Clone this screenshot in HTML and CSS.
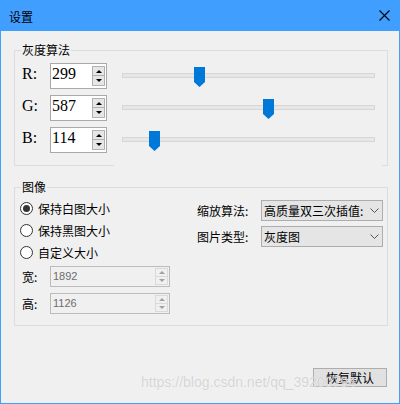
FILE: index.html
```html
<!DOCTYPE html>
<html lang="zh">
<head>
<meta charset="utf-8">
<link rel="stylesheet" href="styles.css">
</head>
<body>
<div class="window">
  <div class="titlebar">
    <span class="title">设置</span>
    <svg class="close" width="11" height="11" viewBox="0 0 11 11"><path d="M0.5 0.5L10.5 10.5M10.5 0.5L0.5 10.5" stroke="#000" stroke-width="1.1" fill="none"/></svg>
  </div>
  <div class="content">
    <div class="group g1">
      <span class="legend">灰度算法</span>
      <div class="row">
        <span class="lbl">R:</span>
        <div class="spin"><span class="val">299</span><div class="btns"><span class="sbtn"><i class="up"></i></span><span class="sbtn"><i class="down"></i></span></div></div>
        <div class="slider"><div class="track"></div><svg class="thumb" style="left:79px" width="11" height="20" viewBox="0 0 11 20"><path d="M0 0H11V15L5.5 20L0 15Z" fill="#0078d7"/></svg></div>
      </div>
      <div class="row">
        <span class="lbl">G:</span>
        <div class="spin"><span class="val">587</span><div class="btns"><span class="sbtn"><i class="up"></i></span><span class="sbtn"><i class="down"></i></span></div></div>
        <div class="slider"><div class="track"></div><svg class="thumb" style="left:148px" width="11" height="20" viewBox="0 0 11 20"><path d="M0 0H11V15L5.5 20L0 15Z" fill="#0078d7"/></svg></div>
      </div>
      <div class="row">
        <span class="lbl">B:</span>
        <div class="spin"><span class="val">114</span><div class="btns"><span class="sbtn"><i class="up"></i></span><span class="sbtn"><i class="down"></i></span></div></div>
        <div class="slider"><div class="track"></div><svg class="thumb" style="left:34px" width="11" height="20" viewBox="0 0 11 20"><path d="M0 0H11V15L5.5 20L0 15Z" fill="#0078d7"/></svg></div>
      </div>
    </div>

    <div class="group g2">
      <span class="legend">图像</span>
      <div class="cols">
        <div class="leftcol">
          <div class="radio"><span class="circle checked"></span><span class="rtext">保持白图大小</span></div>
          <div class="radio"><span class="circle"></span><span class="rtext">保持黑图大小</span></div>
          <div class="radio"><span class="circle"></span><span class="rtext">自定义大小</span></div>
          <div class="drow first"><span class="dlbl">宽:</span><div class="dspin"><span class="dval">1892</span><div class="dbtns"><span class="dbtn"><i class="up"></i></span><span class="dbtn"><i class="down"></i></span></div></div></div>
          <div class="drow"><span class="dlbl">高:</span><div class="dspin"><span class="dval">1126</span><div class="dbtns"><span class="dbtn"><i class="up"></i></span><span class="dbtn"><i class="down"></i></span></div></div></div>
        </div>
        <div class="rightcol">
          <span class="clbl">缩放算法:</span>
          <div class="combo"><span class="ctext">高质量双三次插值:</span><svg class="chev" width="9" height="5" viewBox="0 0 9 5"><path d="M0.5 0.5L4.5 4.5L8.5 0.5" stroke="#555" stroke-width="1" fill="none"/></svg></div>
          <span class="clbl">图片类型:</span>
          <div class="combo"><span class="ctext">灰度图</span><svg class="chev" width="9" height="5" viewBox="0 0 9 5"><path d="M0.5 0.5L4.5 4.5L8.5 0.5" stroke="#555" stroke-width="1" fill="none"/></svg></div>
        </div>
      </div>
    </div>

    <div class="footer"><button class="btn">恢复默认</button></div>
  </div>
  <div class="watermark">https://blog.csdn.net/qq_39200794</div>
</div>
</body>
</html>
```
FILE: styles.css
```css
* { box-sizing: border-box; }
html, body { margin: 0; padding: 0; background: #f0f0f0; }
body { font-family: "Noto Sans CJK SC", "Liberation Sans", sans-serif; font-size: 12px; color: #000; }

.window {
  position: relative;
  width: 400px;
  height: 404px;
  border: 1px solid #409efe;
  border-top: 0;
  background: #f0f0f0;
  display: flex;
  flex-direction: column;
  overflow: hidden;
}

.titlebar {
  height: 31px;
  background: #409efe;
  display: flex;
  align-items: center;
  padding: 0 9px 0 8px;
  flex: none;
}
.title { font-size: 12px; line-height: 14px; flex: 1; padding-top: 2px; }
.close { display: block; }

.content {
  flex: 1;
  display: flex;
  flex-direction: column;
  padding: 19px 11px 16px 13px;
}

.group {
  position: relative;
  border: 1px solid #dcdcdc;
}
.legend {
  position: absolute;
  top: -8px;
  left: 6px;
  padding: 0 1px;
  background: #f0f0f0;
  line-height: 14px;
  font-size: 12px;
}

.g1 {
  border-bottom: 0;
  padding: 12px 0 13px 7px;
  display: flex;
  flex-direction: column;
  gap: 6px;
  background:
    linear-gradient(#dcdcdc, #dcdcdc) left bottom / 99px 1px no-repeat,
    linear-gradient(#dcdcdc, #dcdcdc) right bottom / 5px 1px no-repeat;
}
.row { display: flex; height: 26px; }
.lbl {
  width: 28px;
  height: 19px;
  box-sizing: content-box;
  font-family: "Liberation Serif", serif;
  font-size: 16px;
  line-height: 19px;
  padding-top: 1px;
}
.spin {
  width: 57px;
  height: 26px;
  border: 1px solid #a9a9a9;
  background: #fff;
  display: flex;
}
.val {
  flex: 1;
  font-family: "Liberation Serif", serif;
  font-size: 16px;
  line-height: 19px;
  padding-left: 1px;
}
.btns {
  display: flex;
  flex-direction: column;
  margin: 2px 1px 2px 0;
  width: 13px;
}
.sbtn {
  height: 10px;
  border: 1px solid #b0b0b0;
  background: #e6e6e6;
  display: flex;
  align-items: center;
  justify-content: center;
}
.sbtn + .sbtn { border-top: 0; }
.up, .down {
  display: block;
  width: 0; height: 0;
  border-left: 3px solid transparent;
  border-right: 3px solid transparent;
}
.up { border-bottom: 3px solid #000; }
.down { border-top: 3px solid #000; }

.slider {
  position: relative;
  width: 266px;
  margin-left: 8px;
  height: 26px;
}
.track {
  margin: 10px 0 0 7px;
  width: 253px;
  height: 5px;
  border: 1px solid #d6d6d6;
  background: #e7e7e7;
}
.thumb { position: absolute; top: 4px; display: block; }

.g2 {
  margin-top: 21px;
  padding: 10px 4px 0 5px;
  height: 139px;
}
.cols { display: flex; justify-content: space-between; }
.leftcol { width: 150px; display: flex; flex-direction: column; }
.radio { height: 21px; display: flex; align-items: center; }
.radio + .radio { margin-top: 1px; }
.circle {
  width: 13px; height: 13px;
  border: 1px solid #333;
  border-radius: 50%;
  background: #fff;
  display: flex; align-items: center; justify-content: center;
  flex: none;
}
.circle.checked::after {
  content: "";
  width: 7px; height: 7px;
  border-radius: 50%;
  background: #333;
}
.rtext { margin-left: 5px; line-height: 14px; }

.drow { display: flex; align-items: center; height: 21px; margin-top: 6px; }
.drow.first { margin-top: 3px; }
.dlbl { width: 28px; margin-left: 2px; }
.dspin {
  width: 120px;
  height: 21px;
  border: 1px solid #bcbcbc;
  background: #f0f0f0;
  display: flex;
}
.dval {
  flex: 1;
  font-family: "Liberation Sans", sans-serif;
  font-size: 11px;
  color: #6d6d6d;
  line-height: 19px;
  padding-left: 2px;
}
.dbtns { display: flex; flex-direction: column; margin: 1px 1px 1px 0; width: 13px; }
.dbtn {
  height: 9px;
  border: 1px solid #dadada;
  background: #f0f0f0;
  display: flex; align-items: center; justify-content: center;
}
.dbtn + .dbtn { border-top: 0; height: 8px; }
.dbtn .up { border-bottom-color: #a0a0a0; }
.dbtn .down { border-top-color: #a0a0a0; }

.rightcol {
  width: 186px;
  margin-top: 2px;
  display: grid;
  grid-template-columns: 64px 122px;
  row-gap: 5px;
  align-items: center;
  align-self: flex-start;
}
.clbl { line-height: 14px; }
.combo {
  height: 21px;
  border: 1px solid #adadad;
  background: #e5e5e5;
  display: flex;
  align-items: center;
}
.ctext {
  width: 102px;
  padding-left: 2px;
  white-space: nowrap;
  overflow: hidden;
  line-height: 14px;
}
.chev { display: block; margin-left: 6px; }

.footer { margin-top: auto; display: flex; justify-content: flex-end; padding-right: 1px; }
.btn {
  width: 74px;
  height: 19px;
  border: 1px solid #adadad;
  background: #e1e1e1;
  font-family: "Noto Sans CJK SC", sans-serif;
  font-size: 12px;
  line-height: 14px;
  padding: 0;
  color: #000;
}

.watermark {
  position: absolute;
  left: 140px;
  top: 374px;
  font-family: "Liberation Sans", sans-serif;
  font-size: 14px;
  line-height: 16px;
  color: rgba(200, 200, 200, 0.75);
  text-shadow: 0 0 1px rgba(255, 255, 255, 0.9);
  white-space: nowrap;
}
```
